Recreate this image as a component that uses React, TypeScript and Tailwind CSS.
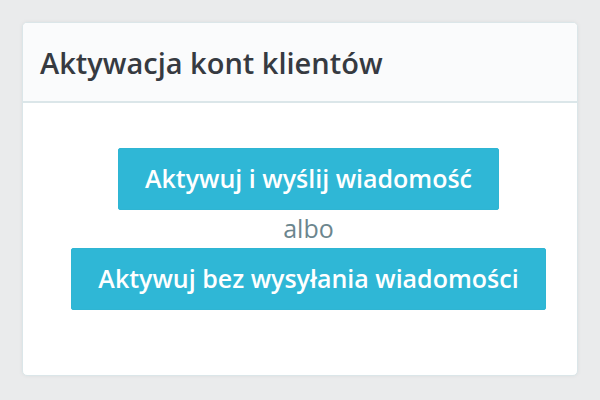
export default function App() {
  return (
    <div className="w-[600px] h-[400px] bg-[#eaebec] p-[22px]" style={{ fontFamily: '"Open Sans", sans-serif' }}>
      <div className="h-[354px] bg-white border border-[#dbe6e9] rounded-[5px] shadow-[0_0_4px_0_rgba(0,0,0,0.06)] overflow-hidden flex flex-col">
        <div className="h-[80px] bg-[#fafbfc] border-b-2 border-[#dbe6e9] flex items-center px-[17px]">
          <h1 className="text-[29px] font-semibold text-[#363a41] leading-none">Aktywacja kont klientów</h1>
        </div>
        <div className="flex flex-col items-center pt-[45px] pl-[17px]">
          <button className="h-[62px] px-[26px] bg-[#2fb7d6] text-white text-[25px] font-semibold rounded-[2px] border border-[#2fb5d3]">
            Aktywuj i wyślij wiadomość
          </button>
          <div className="h-[38px] flex items-center text-[25px] text-[#6c868e]">albo</div>
          <button className="h-[62px] px-[26px] bg-[#2fb7d6] text-white text-[25px] font-semibold rounded-[2px] border border-[#2fb5d3]">
            Aktywuj bez wysyłania wiadomości
          </button>
        </div>
      </div>
    </div>
  );
}
